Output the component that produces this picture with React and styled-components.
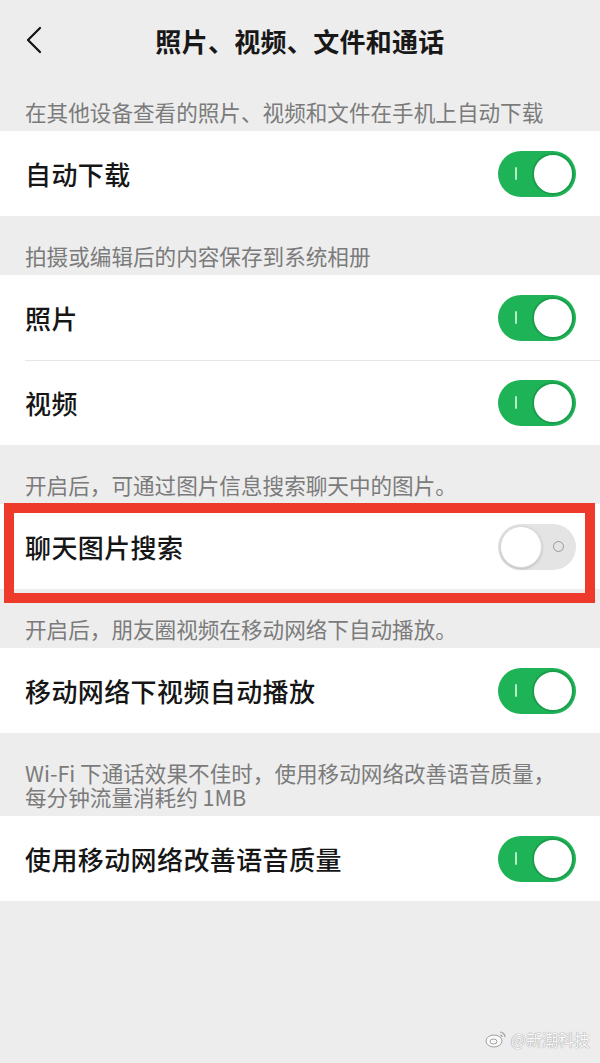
import styled, { createGlobalStyle } from "styled-components";

const GlobalStyle = createGlobalStyle`
    html, body {
        margin: 0;
        padding: 0;
        background: #ededed;
    }
    body {
        font-family: "Noto Sans CJK SC", "Noto Sans", "Liberation Sans", sans-serif;
    }
`;

const Page = styled.div`
    width: 600px;
    min-height: 1063px;
    background: #ededed;
    position: relative;
`;

const NavBar = styled.div`
    height: 80px;
    display: grid;
    grid-template-columns: 80px 1fr 80px;
    align-items: center;
`;

const BackButton = styled.div`
    display: flex;
    align-items: center;
    padding-left: 26px;
    height: 100%;
`;

const Title = styled.h1`
    margin: 0;
    text-align: center;
    font-size: 26px;
    font-weight: 700;
    color: #181818;
    letter-spacing: 0.3px;
`;

const SectionHeader = styled.div`
    padding: ${(p) => (p.$first ? "20px" : "28px")} 20px 7px 25px;
    font-size: 21.6px;
    line-height: 24px;
    color: #7b7b7b;
    white-space: nowrap;
`;

const Group = styled.div`
    background: #fff;
    position: relative;
`;

const Row = styled.div`
    height: 85px;
    box-sizing: border-box;
    display: flex;
    align-items: center;
    justify-content: space-between;
    padding: 0 24px 0 25px;
    position: relative;
    & + &::before {
        content: "";
        position: absolute;
        top: 0;
        left: 25px;
        right: 0;
        height: 1px;
        background: #e6e6e6;
    }
`;

const Label = styled.span`
    font-size: 26px;
    font-weight: 500;
    color: #161616;
    letter-spacing: 0.4px;
`;

const Track = styled.span`
    width: 78px;
    height: 46px;
    box-sizing: border-box;
    border-radius: 23px;
    padding: 2px;
    display: flex;
    flex-direction: ${(p) => (p.$on ? "row" : "row-reverse")};
    align-items: center;
    background: ${(p) => (p.$on ? "#1fb357" : "#e4e4e4")};
`;

const MarkSlot = styled.span`
    flex: 1;
    display: flex;
    align-items: center;
    justify-content: center;
`;

const OnMark = styled.span`
    width: 2px;
    height: 13px;
    background: #b5ecc8;
    border-radius: 1px;
`;

const OffMark = styled.span`
    width: 9px;
    height: 9px;
    border-radius: 50%;
    border: 1.5px solid #9a9a9a;
`;

const Knob = styled.span`
    width: 42px;
    height: 42px;
    border-radius: 50%;
    background: #fff;
    box-sizing: border-box;
    border: ${(p) => (p.$on ? "2px solid #1a9e4c" : "1px solid #d9d9d9")};
    box-shadow: ${(p) => (p.$on ? "none" : "0 1px 3px rgba(0,0,0,0.18)")};
`;

const Highlight = styled.div`
    position: relative;
    &::after {
        content: "";
        position: absolute;
        left: 4px;
        right: 5px;
        top: -1px;
        bottom: -14px;
        border: 10px solid #ee3a2b;
        pointer-events: none;
    }
`;

const Watermark = styled.div`
    position: absolute;
    right: 10px;
    bottom: 12px;
    display: flex;
    align-items: center;
    gap: 4px;
    font-size: 16px;
    color: #fafafa;
    text-shadow: 0 0 1px #9a9a9a, 0 0 1px #9a9a9a;
`;

function Toggle({ on }) {
    return (
        <Track $on={on}>
            <MarkSlot>{on ? <OnMark /> : <OffMark />}</MarkSlot>
            <Knob $on={on} />
        </Track>
    );
}

function SettingRow({ label, on = true }) {
    return (
        <Row>
            <Label>{label}</Label>
            <Toggle on={on} />
        </Row>
    );
}

export default function App() {
    return (
        <Page>
            <GlobalStyle />
            <NavBar>
                <BackButton>
                    <svg width="16" height="28" viewBox="0 0 16 28">
                        <polyline points="14,2 2,14 14,26" fill="none" stroke="#111" strokeWidth="2.2" strokeLinecap="round" strokeLinejoin="round" />
                    </svg>
                </BackButton>
                <Title>照片、视频、文件和通话</Title>
                <div />
            </NavBar>

            <SectionHeader $first>在其他设备查看的照片、视频和文件在手机上自动下载</SectionHeader>
            <Group>
                <SettingRow label="自动下载" />
            </Group>

            <SectionHeader>拍摄或编辑后的内容保存到系统相册</SectionHeader>
            <Group>
                <SettingRow label="照片" />
                <SettingRow label="视频" />
            </Group>

            <SectionHeader>开启后，可通过图片信息搜索聊天中的图片。</SectionHeader>
            <Highlight>
                <Group>
                    <SettingRow label="聊天图片搜索" on={false} />
                </Group>
            </Highlight>

            <SectionHeader>开启后，朋友圈视频在移动网络下自动播放。</SectionHeader>
            <Group>
                <SettingRow label="移动网络下视频自动播放" />
            </Group>

            <SectionHeader>
                Wi-Fi 下通话效果不佳时，使用移动网络改善语音质量，
                <br />
                每分钟流量消耗约 1MB
            </SectionHeader>
            <Group>
                <SettingRow label="使用移动网络改善语音质量" />
            </Group>

            <Watermark>
                <svg width="22" height="18" viewBox="0 0 22 18">
                    <ellipse cx="9" cy="11" rx="8" ry="6" fill="#fafafa" stroke="#a0a0a0" strokeWidth="1" />
                    <ellipse cx="8.5" cy="11.5" rx="3.5" ry="2.5" fill="none" stroke="#a0a0a0" strokeWidth="1" />
                    <path d="M15 2 a5 5 0 0 1 5 5" fill="none" stroke="#a0a0a0" strokeWidth="1.2" />
                    <path d="M15 5 a2 2 0 0 1 2 2" fill="none" stroke="#a0a0a0" strokeWidth="1.2" />
                </svg>
                <span>@新潮科技</span>
            </Watermark>
        </Page>
    );
}
